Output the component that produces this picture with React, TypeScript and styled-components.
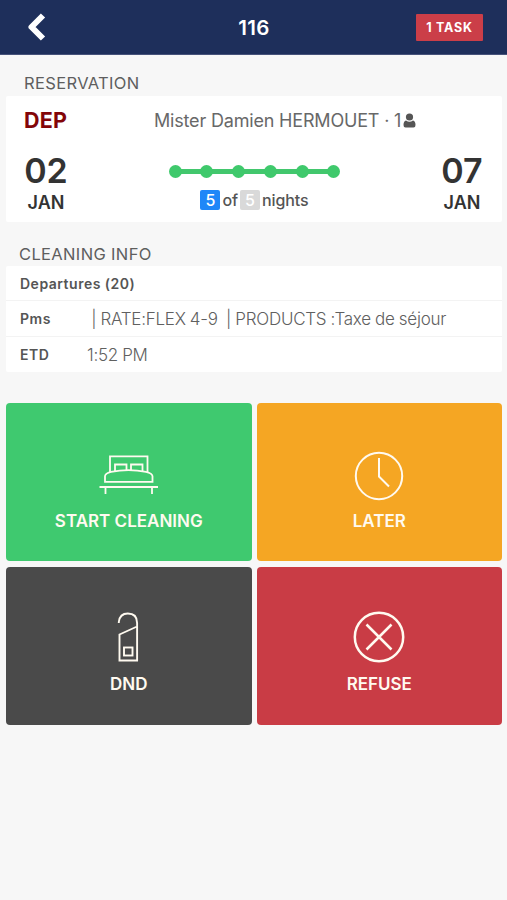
import React from "react";
import styled, { createGlobalStyle } from "styled-components";

const GlobalStyle = createGlobalStyle`
  * { box-sizing: border-box; }
  body {
    margin: 0;
    background: #f7f7f7;
    font-family: Inter, "Liberation Sans", sans-serif;
    color: #333;
  }
`;

const Screen = styled.main`
  min-height: 900px;
  background: #f7f7f7;
`;

const Header = styled.header`
  display: grid;
  grid-template-columns: 1fr auto 1fr;
  align-items: center;
  height: 55px;
  padding: 0 24px 0 27px;
  background: #1e2f5b;
  border-bottom: 1px solid #46527a;
  color: #fff;
`;

const BackButton = styled.button`
  display: flex;
  padding: 0;
  border: 0;
  background: none;
  color: inherit;
`;

const Title = styled.h1`
  margin: 1px 2px 0 0;
  font-size: 20.5px;
  font-weight: 600;
  line-height: 24px;
  letter-spacing: 0.4px;
`;

const TaskBadge = styled.span`
  justify-self: end;
  width: 67px;
  height: 27px;
  border-radius: 1px;
  background: #cb3e48;
  font-size: 12.5px;
  font-weight: 700;
  line-height: 27px;
  letter-spacing: 0.8px;
  text-align: center;
`;

const SectionTitle = styled.h2<{ $inset: number }>`
  margin: 0;
  padding-left: ${(p) => p.$inset}px;
  color: #5e5e5e;
  font-size: 16.5px;
  font-weight: 400;
  line-height: 24px;
  letter-spacing: 0.35px;
`;

const Reservation = styled.section`
  padding-top: 16px;
`;

const Card = styled.div`
  margin: 0 5px 0 6px;
  border-radius: 2px;
  background: #fff;
`;

const ReservationCard = styled(Card)`
  height: 126px;
  margin-top: 1px;
  padding: 11px 18px 0;
`;

const GuestRow = styled.div`
  display: flex;
  align-items: center;
  height: 26px;
`;

const Status = styled.strong`
  width: 130px;
  color: #830508;
  font-size: 21.5px;
  font-weight: 700;
  letter-spacing: 0.2px;
`;

const Guest = styled.span`
  display: flex;
  align-items: center;
  gap: 2px;
  color: #686868;
  font-size: 18px;
  font-weight: 400;
  letter-spacing: -0.18px;
  white-space: nowrap;
`;

const StayRow = styled.div`
  display: grid;
  grid-template-columns: 44px 1fr 44px;
  margin-top: 18px;
`;

const DateBox = styled.div`
  display: flex;
  flex-direction: column;
  align-items: center;
  white-space: nowrap;
`;

const Day = styled.span`
  font-size: 34px;
  font-weight: 600;
  line-height: 39px;
`;

const Month = styled.span`
  padding-top: 2px;
  font-size: 18px;
  font-weight: 600;
  line-height: 22px;
`;

const Nights = styled.div`
  display: flex;
  flex-direction: column;
  align-items: center;
  padding: 14px 0 0 1px;
`;

const Track = styled.div`
  display: flex;
  align-items: center;
  justify-content: space-between;
  width: 172px;
  height: 13px;
  background: linear-gradient(#42c76d, #42c76d) center / 160px 5px no-repeat;
`;

const Stop = styled.i`
  width: 13px;
  height: 13px;
  border-radius: 50%;
  background: #3fc96c;
`;

const NightText = styled.div`
  display: flex;
  align-items: center;
  gap: 2px;
  height: 20px;
  margin-top: 12px;
  color: #555;
  font-size: 16px;
  font-weight: 500;
  letter-spacing: -0.1px;
`;

const NightCount = styled.span<{ $total?: boolean }>`
  width: 20px;
  height: 20px;
  border-radius: 2px;
  background: ${(p) => (p.$total ? "#d9d9d9" : "#1e87f8")};
  color: #fff;
  line-height: 20px;
  text-align: center;
`;

const Cleaning = styled.section`
  padding-top: 20px;
`;

const InfoRow = styled.div`
  display: flex;
  align-items: center;
  height: 36px;
  padding-left: 14px;
  border-top: 1px solid #f3f3f3;

  &:first-child {
    height: 34px;
    border-top: 0;
  }
`;

const InfoLabel = styled.span`
  width: 67px;
  color: #555;
  font-size: 14px;
  font-weight: 600;
  letter-spacing: 0.5px;
  white-space: nowrap;
`;

const InfoValue = styled.span`
  color: #606060;
  font-size: 17px;
  font-weight: 300;
  letter-spacing: -0.25px;
  word-spacing: -0.35px;
  white-space: pre;
`;

const Actions = styled.nav`
  display: grid;
  grid-template-columns: 1fr 1fr;
  grid-auto-rows: 158px;
  gap: 6px 5px;
  padding: 31px 5px 0 6px;
`;

const Action = styled.button<{ $color: string; $lift: number }>`
  display: flex;
  flex-direction: column;
  align-items: center;
  padding: ${(p) => 43 - p.$lift}px 0 0;
  border: 0;
  border-radius: 4px;
  background: ${(p) => p.$color};
  color: #fffaf0;
  font-family: inherit;
  font-size: 17px;
  font-weight: 600;
  line-height: 24px;
  letter-spacing: 0;

  svg {
    margin-bottom: ${(p) => (p.$lift ? 5 : 3)}px;
  }
`;

const LineIcon = ({ children, width = 2 }: { children: React.ReactNode; width?: number }) => (
  <svg width="60" height="60" viewBox="0 0 60 60" fill="none" stroke="currentColor" strokeWidth={width}>
    {children}
  </svg>
);

const BedIcon = () => (
  <LineIcon width={1.8}>
    <path d="M11 26V10.300h37.500V26" />
    <path d="M16 25v-6.500h11.500V25M32 25v-6.500h11.500V25" />
    <path d="M6 35.800v-5.500q0-3 6-4.500 17.500-3.500 35 0 6.500 1.500 6.500 4.500v5.500zM.5 41h58.500M6.500 41.500v6.500M53 41.500v6.500" />
  </LineIcon>
);

const ClockIcon = () => (
  <LineIcon>
    <circle cx="30" cy="30" r="23.200" />
    <path d="M30 12v18.500l10 10" />
  </LineIcon>
);

const HangerIcon = () => (
  <LineIcon width={1.9}>
    <path d="M19.800 16v-1q1-8.500 9-8.500 9.300 0 9.300 9.500v37.500H20.500V27.500l17.600-8" />
    <rect x="25" y="40.500" width="8.500" height="8" />
  </LineIcon>
);

const CrossIcon = () => (
  <LineIcon width={2.5}>
    <circle cx="30" cy="30" r="24.200" />
    <path d="M17.500 17.500l25 25M42.500 17.500l-25 25" />
  </LineIcon>
);

const actions = [
  { label: "START CLEANING", color: "#3fc96f", icon: <BedIcon />, lift: 0 },
  { label: "LATER", color: "#f5a623", icon: <ClockIcon />, lift: 0 },
  { label: "DND", color: "#4a4a4a", icon: <HangerIcon />, lift: 3 },
  { label: "REFUSE", color: "#c93c45", icon: <CrossIcon />, lift: 3 },
];

const StayDate = ({ day, month }: { day: string; month: string }) => (
  <DateBox>
    <Day>{day}</Day>
    <Month>{month}</Month>
  </DateBox>
);

export default function App() {
  return (
    <>
      <GlobalStyle />
      <Screen>
        <Header>
          <BackButton aria-label="Back">
            <svg width="20" height="28" viewBox="0 0 20 28" fill="none" stroke="currentColor" strokeWidth="6" strokeLinejoin="round">
              <path d="M16 2.500L4.500 14 16 25.500" />
            </svg>
          </BackButton>
          <Title>116</Title>
          <TaskBadge>1 TASK</TaskBadge>
        </Header>

        <Reservation>
          <SectionTitle $inset={24}>RESERVATION</SectionTitle>
          <ReservationCard>
            <GuestRow>
              <Status>DEP</Status>
              <Guest>
                Mister Damien HERMOUET · 1
                <svg width="13" height="15" viewBox="0 0 13 15" fill="#555">
                  <circle cx="6.500" cy="4" r="3.600" />
                  <path d="M3 7.500q3.500 2.500 7 0 2.500.500 2.500 4.500 0 2.500-2 2.500h-8q-2 0-2-2.500 0-4 2.500-4.500z" />
                </svg>
              </Guest>
            </GuestRow>
            <StayRow>
              <StayDate day="02" month="JAN" />
              <Nights>
                <Track>
                  {[0, 1, 2, 3, 4, 5].map((night) => (
                    <Stop key={night} />
                  ))}
                </Track>
                <NightText>
                  <NightCount>5</NightCount>
                  of
                  <NightCount $total>5</NightCount>
                  nights
                </NightText>
              </Nights>
              <StayDate day="07" month="JAN" />
            </StayRow>
          </ReservationCard>
        </Reservation>

        <Cleaning>
          <SectionTitle $inset={19}>CLEANING INFO</SectionTitle>
          <Card>
            <InfoRow>
              <InfoLabel>Departures (20)</InfoLabel>
            </InfoRow>
            <InfoRow>
              <InfoLabel>Pms</InfoLabel>
              <InfoValue>{" | RATE:FLEX 4-9  | PRODUCTS :Taxe de séjour"}</InfoValue>
            </InfoRow>
            <InfoRow>
              <InfoLabel>ETD</InfoLabel>
              <InfoValue>1:52 PM</InfoValue>
            </InfoRow>
          </Card>
        </Cleaning>

        <Actions>
          {actions.map(({ label, color, icon, lift }) => (
            <Action key={label} $color={color} $lift={lift}>
              {icon}
              {label}
            </Action>
          ))}
        </Actions>
      </Screen>
    </>
  );
}
